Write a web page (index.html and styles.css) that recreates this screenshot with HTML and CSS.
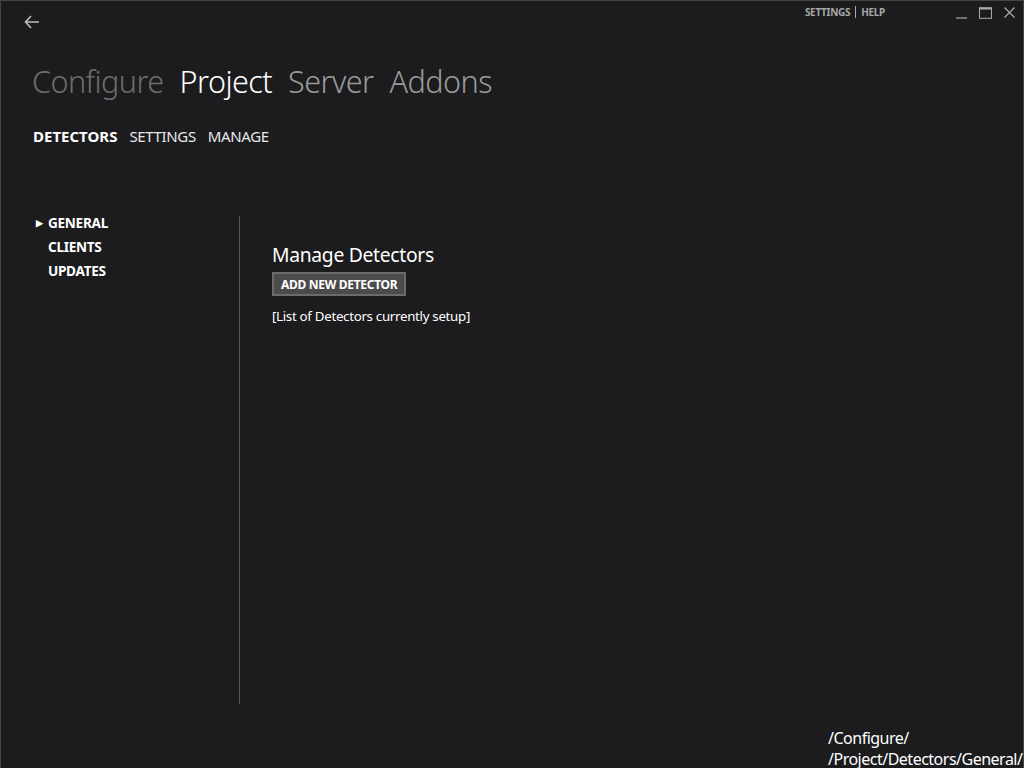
FILE: index.html
```html
<!DOCTYPE html>
<html>
<head>
<meta charset="utf-8">
<link rel="stylesheet" href="styles.css">
</head>
<body>
<div class="window">
  <div class="titlebar">
    <div class="back">
      <svg width="16" height="14" viewBox="0 0 16 14"><path d="M7 1 L1.5 7 L7 13 M1.5 7 H15" fill="none" stroke="#bdbdbd" stroke-width="1.6"/></svg>
    </div>
    <div class="titlelinks"><span>SETTINGS</span><span class="sep"></span><span>HELP</span></div>
    <div class="winctl">
      <svg width="11" height="12" viewBox="0 0 11 12"><path d="M0 11 H11" stroke="#aaa" stroke-width="1.2"/></svg>
      <svg width="13" height="12" viewBox="0 0 13 12"><rect x="0.5" y="0.8" width="12" height="10.5" fill="none" stroke="#aaa" stroke-width="1"/><path d="M0.5 1.5 H12.5" stroke="#aaa" stroke-width="2"/></svg>
      <svg width="11" height="11" viewBox="0 0 11 11"><path d="M0.5 0.5 L10.5 10.5 M10.5 0.5 L0.5 10.5" stroke="#aaa" stroke-width="1.2"/></svg>
    </div>
  </div>
  <nav class="mainnav">
    <span class="m dim">Configure</span>
    <span class="m active">Project</span>
    <span class="m">Server</span>
    <span class="m">Addons</span>
  </nav>
  <nav class="subnav">
    <span class="s active">DETECTORS</span>
    <span class="s">SETTINGS</span>
    <span class="s">MANAGE</span>
  </nav>
  <div class="body">
    <aside class="side">
      <div class="item sel"><span class="tri">&#9654;</span>GENERAL</div>
      <div class="item">CLIENTS</div>
      <div class="item">UPDATES</div>
    </aside>
    <main class="content">
      <h2 class="title">Manage Detectors</h2>
      <button class="btn">ADD NEW DETECTOR</button>
      <p class="list">[List of Detectors currently setup]</p>
    </main>
  </div>
  <div class="crumb">
    <div>/Configure/</div>
    <div>/Project/Detectors/General/</div>
  </div>
</div>
</body>
</html>
```
FILE: styles.css
```css
* { box-sizing: border-box; }
html, body { margin: 0; padding: 0; background: #1c1c1e; }
body { font-family: "Noto Sans", "Open Sans", sans-serif; color: #fff; }
.window {
  width: 1024px; height: 768px;
  border: 1px solid #454545;
  border-bottom: none;
  background: #1c1c1e;
  display: flex; flex-direction: column;
  overflow: hidden;
}
.titlebar { display: flex; align-items: flex-start; height: 40px; }
.back { padding: 11px 0 0 23px; }
.titlelinks {
  margin-left: auto; padding-top: 4px;
  font-size: 10px; font-weight: 700; color: #a8a8a8;
  display: flex; align-items: center; letter-spacing: -0.3px;
}
.titlelinks .sep { width: 1px; height: 12px; background: #a8a8a8; margin: 0 5px; }
.winctl { display: flex; gap: 12px; padding: 6px 8px 0 71px; }
.mainnav { display: flex; gap: 16px; padding: 20px 0 0 31px; font-size: 30.6px; line-height: 40px; font-weight: 300; letter-spacing: -0.58px; }
.m { color: #9a9a9a; }
.m.dim { color: #6c6c6c; }
.m.active { color: #fff; }
.subnav { display: flex; gap: 12px; padding: 25px 0 0 32px; font-size: 15px; line-height: 20px; }
.s { color: #e8e8e8; letter-spacing: -0.35px; }
.s.active { font-weight: 700; color: #fff; letter-spacing: 0; }
.body { display: flex; flex: 1; padding-top: 65px; }
.side { width: 238px; padding: 0 0 0 35px; }
.item { font-size: 13.6px; font-weight: 700; line-height: 24px; padding-left: 12px; position: relative; letter-spacing: -0.3px; }
.item .tri { position: absolute; left: 0; top: 0; font-size: 9px; }
.content { border-left: 1px solid #555; height: 488px; margin-top: 5px; padding: 25px 0 0 32px; }
.title { margin: 0; font-size: 19.3px; font-weight: 400; line-height: 28px; letter-spacing: -0.3px; }
.btn {
  display: block; font-family: inherit; margin: 3px 0 0;
  background: #4b4b4b; color: #fff; border: 2px solid #6b6b6b;
  font-size: 12px; font-weight: 700; padding: 0 7px; height: 24px; letter-spacing: -0.3px;
}
.list { margin: 10px 0 0; font-size: 13.3px; line-height: 20px; letter-spacing: -0.3px; }
.crumb { margin-left: 827px; margin-top: auto; font-size: 16px; line-height: 21px; white-space: nowrap; letter-spacing: -0.5px; margin-bottom: -2px; }
```
